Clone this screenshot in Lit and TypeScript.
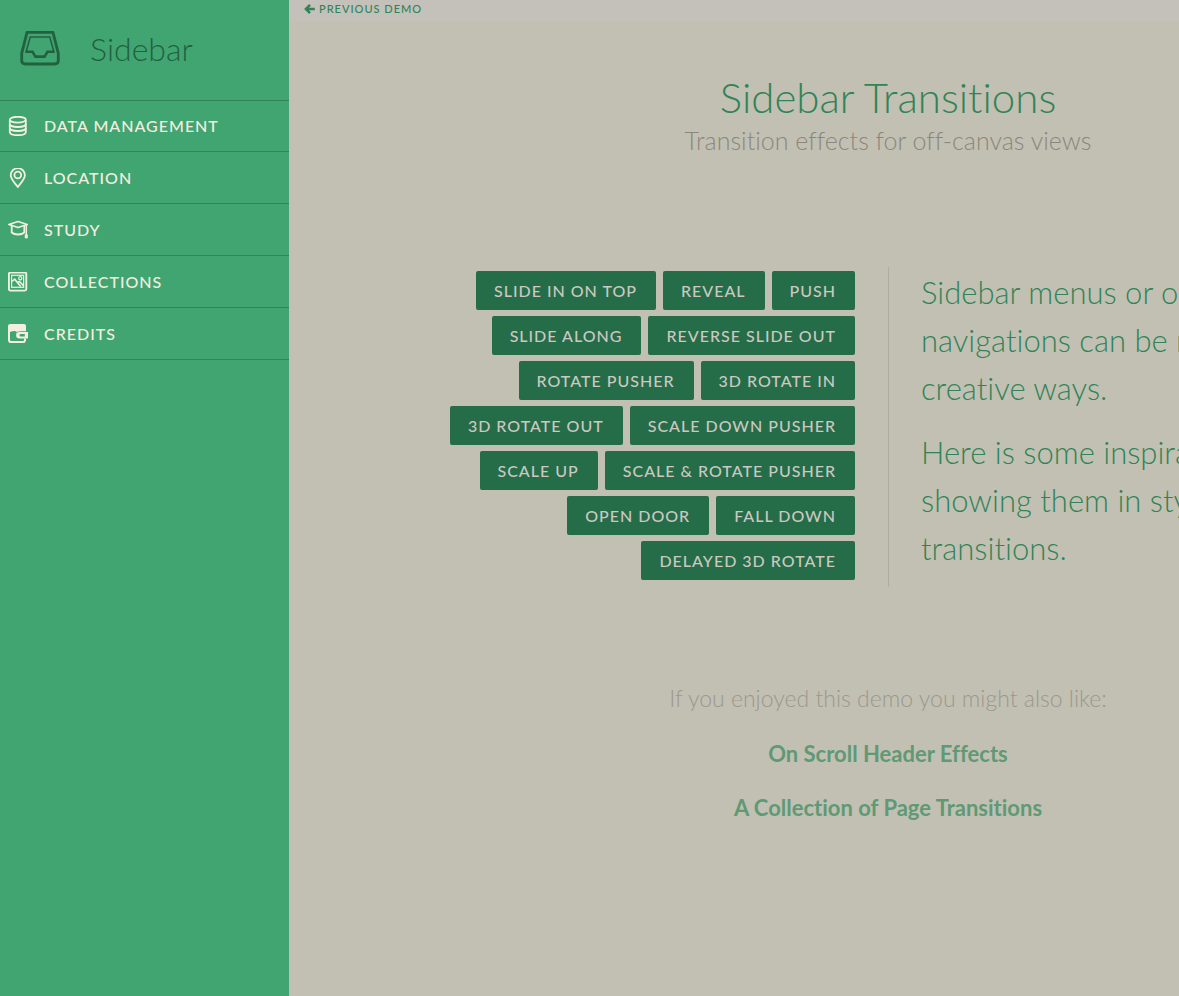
import { LitElement, html, css, svg } from "lit";
import { customElement } from "lit/decorators.js";

const menu = [
  {
    label: "Data Management",
    icon: svg`<g fill="none" stroke="currentColor" stroke-width="1.8">
      <ellipse cx="9.800" cy="3.700" rx="8" ry="2.900"/>
      <path d="M1.800 4v12c0 1.900 3.600 3.200 8 3.200s8-1.300 8-3.200V4"/>
      <path d="M1.800 8c0 1.700 3.600 3 8 3s8-1.300 8-3M1.800 12c0 1.700 3.600 3 8 3s8-1.300 8-3"/></g>`,
  },
  {
    label: "Location",
    icon: svg`<g fill="none" stroke="currentColor" stroke-width="1.8">
      <path d="M9.800 19C6.800 15 2.700 11 2.700 7.200a7.100 7 0 0 1 14.200 0C16.900 11 12.800 15 9.800 19z"/>
      <circle cx="9.800" cy="7" r="3.400"/></g>`,
  },
  {
    label: "Study",
    icon: svg`<g fill="none" stroke="currentColor" stroke-width="1.8" stroke-linejoin="round">
      <path d="M.9 4.500 10 1.500l9.200 3L10 7.500z"/>
      <path d="M3.700 6v6.500c1.400 1.300 3.700 2 6.300 2s4.900-.7 6.300-2V6"/>
      <path d="M18.300 5v10" stroke-width="1.500"/></g>
      <path d="M16.800 14.500h3v3.800h-3z" fill="currentColor"/>`,
  },
  {
    label: "Collections",
    icon: svg`<g fill="none" stroke="currentColor">
      <rect x=".9" y=".6" width="17.400" height="18" rx="1.500" stroke-width="1.900"/>
      <rect x="3.600" y="3.300" width="12" height="12" stroke-width="1.200"/>
      <path d="m4 9.500 2.700-2.300 6 7.300M9.500 10.500l2-1.100 4 4.400" stroke-width="1.600"/>
      <circle cx="12.300" cy="6.200" r="1.600" stroke-width="1.200"/></g>`,
  },
  {
    label: "Credits",
    icon: svg`<path d="M2.200 0h13.800q2 0 2 2v5.200h-5.500Q8.500 7.200 7.300 9H0V2Q0 0 2.200 0z" fill="currentColor"/>
      <path d="M1 6v10q0 2.100 2.100 2.100h11.800q2.100 0 2.100-2.100v-1.500" fill="none" stroke="currentColor" stroke-width="2"/>
      <path d="M2 8.100q4.500-1.700 6.500-.6L7.300 9.800H2z" fill="#41a571"/>
      <path fill-rule="evenodd" d="M11.400 8H20v6.600h-8.600a3.300 3.300 0 0 1 0-6.600zm1.400 2a1.300 1.300 0 0 0 0 2.600h4v-2.600z" fill="currentColor"/>`,
  },
];

const effects = [
  "Slide in on top", "Reveal", "Push", "Slide along", "Reverse slide out",
  "Rotate pusher", "3D rotate in", "3D rotate out", "Scale down pusher",
  "Scale up", "Scale & rotate pusher", "Open door", "Fall down", "Delayed 3D rotate",
];

@customElement("side-menu")
export class SideMenu extends LitElement {
  static styles = css`
    :host { display: block; flex: 0 0 289px; background: #41a571; }
    .title {
      display: flex; align-items: center; gap: 30px; height: 100px; margin: 0;
      padding: 0 20px 4px; box-sizing: border-box;
      font-size: 32px; font-weight: 300; color: #226140;
    }
    .title svg { width: 40px; height: 40px; }
    .list { list-style: none; margin: 0; padding: 0; box-shadow: inset 0 1px #308457; }
    .link {
      display: flex; align-items: center; gap: 16px; height: 52px; padding: 0 8px;
      box-sizing: border-box; border-bottom: 1px solid #308457;
      color: #f3efe0; font-size: 16px; font-weight: 500; text-decoration: none;
      text-transform: uppercase; letter-spacing: 1px;
    }
    .link svg { width: 20px; height: 20px; }
  `;
  render() {
    return html`<nav>
      <h2 class="title">
        <svg viewBox="0 0 40 40" fill="none" stroke="currentColor" stroke-linejoin="round" aria-hidden="true">
          <path stroke-width="2.800" d="M7 4.400h26l5.300 21V32.500q0 3.500-3.500 3.500H5.200q-3.500 0-3.500-3.500V25.400z"/>
          <path stroke-width="1.600" d="M6.300 23.200 10.200 9h19.600l3.900 14.200"/>
          <path stroke-width="2.600" stroke-linejoin="miter" d="M5.300 23.800h7.200l3 4.800h9l3-4.800h7.200"/>
        </svg>
        <span>Sidebar</span>
      </h2>
      <ul class="list">
        ${menu.map((m) => html`<li><a class="link" href="#">
          <svg viewBox="0 0 20 20" aria-hidden="true">${m.icon}</svg><span>${m.label}</span></a></li>`)}
      </ul>
    </nav>`;
  }
}

@customElement("app-root")
export class AppRoot extends LitElement {
  static styles = css`
    :host {
      display: flex; min-height: 100vh; overflow: hidden;
      background: #c2c0b2; font-family: Lato, sans-serif; color: #308457;
      font-variant-ligatures: none;
    }
    .page { flex: 0 0 calc(100% + 19px); }
    .top {
      display: flex; height: 21px; padding: 0 15px; background: #c4c1bb;
      font-size: 11px; line-height: 18px;
    }
    .back {
      display: flex; align-items: center; gap: 4px; height: 18px; color: inherit;
      font-weight: 500; text-decoration: none; text-transform: uppercase; letter-spacing: 1px;
    }
    .back svg { width: 11px; height: 10px; }
    .header { padding: 49px 32px 0; text-align: center; }
    .heading { margin: 0; font-size: 42px; line-height: 54px; font-weight: 300; }
    .tagline { margin: 0; font-size: 25px; line-height: 32px; font-weight: 300; color: #8b877c; }
    .main {
      display: grid; grid-template-columns: 1fr 1fr; max-width: 1104px;
      margin: 0 auto; padding: 111px 0 79px;
    }
    .effects {
      display: flex; flex-wrap: wrap; justify-content: flex-end; align-content: flex-start;
      gap: 6px 7px; padding: 4px 33px 0;
    }
    .effect {
      height: 39px; padding: 0 19px 0 18px; border: 0; border-radius: 2px;
      background: #256d49; color: #cbc9c0; font-family: inherit; font-size: 16px; font-weight: 500;
      text-transform: uppercase; letter-spacing: 1px;
    }
    .intro {
      padding: 1px 64px 15px 32px; border-left: 1px solid #aeaba0;
      font-size: 31px; line-height: 48px; font-weight: 300;
    }
    .intro p { margin: 0 0 16px; }
    .intro p:last-child { margin: 0; }
    .related { text-align: center; font-size: 23px; line-height: 32px; font-weight: 300; color: #9b988d; }
    .related p { margin: 0; padding: 16px 0 24px; }
    .more { display: block; margin-bottom: 22px; font-size: 22px; font-weight: 700; color: #5f9975; text-decoration: none; }
  `;
  render() {
    return html`
      <side-menu></side-menu>
      <div class="page">
        <div class="top">
          <a class="back" href="#">
            <svg viewBox="0 0 11 10" fill="none" stroke="currentColor" stroke-width="2.500" aria-hidden="true">
              <path d="M6 .9 1.900 5 6 9.100M2 5h8.800"/></svg>
            <span>Previous Demo</span>
          </a>
        </div>
        <header class="header">
          <h1 class="heading">Sidebar Transitions</h1>
          <p class="tagline">Transition effects for off-canvas views</p>
        </header>
        <main class="main">
          <div class="effects">
            ${effects.map((e) => html`<button class="effect" type="button">${e}</button>`)}
          </div>
          <div class="intro">
            <p>Sidebar menus or off-canvas navigations can be revealed in creative ways.</p>
            <p>Here is some inspiration for showing them in style using transitions.</p>
          </div>
        </main>
        <section class="related">
          <p>If you enjoyed this demo you might also like:</p>
          <a class="more" href="#">On Scroll Header Effects</a>
          <a class="more" href="#">A Collection of Page Transitions</a>
        </section>
      </div>`;
  }
}
